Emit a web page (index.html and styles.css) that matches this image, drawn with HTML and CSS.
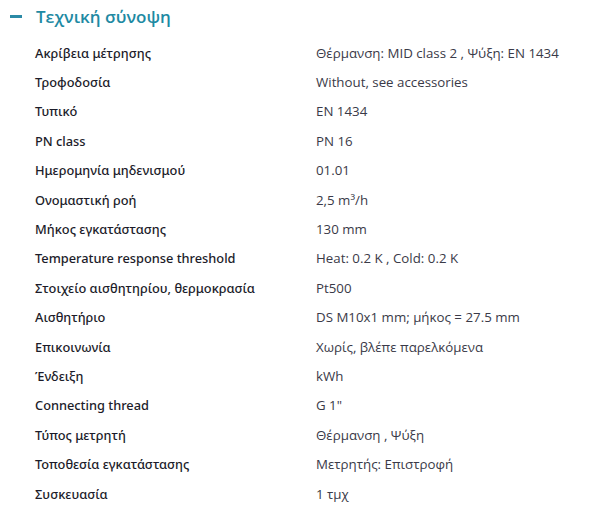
FILE: index.html
```html
<!DOCTYPE html>
<html lang="el">
<head>
<meta charset="utf-8">
<link rel="stylesheet" href="styles.css">
</head>
<body>
<section class="panel">
  <h2 class="title"><span class="minus"></span>Τεχνική σύνοψη</h2>
  <dl class="specs">
    <div class="row"><dt>Ακρίβεια μέτρησης</dt><dd>Θέρμανση: MID class 2 , Ψύξη: EN 1434</dd></div>
    <div class="row"><dt>Τροφοδοσία</dt><dd>Without, see accessories</dd></div>
    <div class="row"><dt>Τυπικό</dt><dd>EN 1434</dd></div>
    <div class="row"><dt>PN class</dt><dd>PN 16</dd></div>
    <div class="row"><dt>Ημερομηνία μηδενισμού</dt><dd>01.01</dd></div>
    <div class="row"><dt>Ονομαστική ροή</dt><dd>2,5 m³/h</dd></div>
    <div class="row"><dt>Μήκος εγκατάστασης</dt><dd>130 mm</dd></div>
    <div class="row"><dt>Temperature response threshold</dt><dd>Heat: 0.2 K , Cold: 0.2 K</dd></div>
    <div class="row"><dt>Στοιχείο αισθητηρίου, θερμοκρασία</dt><dd>Pt500</dd></div>
    <div class="row"><dt>Αισθητήριο</dt><dd>DS M10x1 mm; μήκος = 27.5 mm</dd></div>
    <div class="row"><dt>Επικοινωνία</dt><dd>Χωρίς, βλέπε παρελκόμενα</dd></div>
    <div class="row"><dt>Ένδειξη</dt><dd>kWh</dd></div>
    <div class="row"><dt>Connecting thread</dt><dd>G 1"</dd></div>
    <div class="row"><dt>Τύπος μετρητή</dt><dd>Θέρμανση , Ψύξη</dd></div>
    <div class="row"><dt>Τοποθεσία εγκατάστασης</dt><dd>Μετρητής: Επιστροφή</dd></div>
    <div class="row"><dt>Συσκευασία</dt><dd>1 τμχ</dd></div>
  </dl>
</section>
</body>
</html>
```
FILE: styles.css
```css
html, body {
  margin: 0;
  padding: 0;
  background: #ffffff;
}
body {
  font-family: "Open Sans", "Noto Sans", sans-serif;
}
.panel {
  padding: 4px 0 0 10px;
}
.title {
  display: flex;
  align-items: center;
  gap: 14px;
  margin: 0;
  height: 24px;
  font-size: 17px;
  font-weight: 600;
  color: #1e8aa3;
}
.minus {
  display: block;
  width: 12px;
  height: 3px;
  background: #2b8aa6;
}
.specs {
  margin: 10px 0 0 25px;
  padding: 0;
}
.row {
  display: grid;
  grid-template-columns: 281px 1fr;
  height: 29.4px;
  align-items: center;
  font-size: 13.3px;
}
.row dt {
  font-family: "Noto Sans", "Open Sans", sans-serif;
  font-size: 12.8px;
  color: #1c1c2a;
  font-weight: 500;
}
.row dd {
  margin: 0;
  color: #3a3a48;
}
```
